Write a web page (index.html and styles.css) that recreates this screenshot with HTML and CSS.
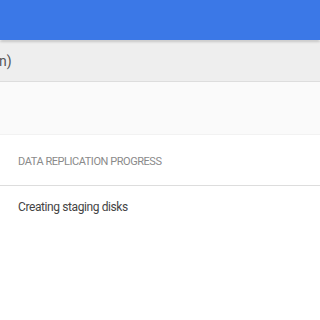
FILE: index.html
```html
<!DOCTYPE html>
<html lang="en">
<head>
    <meta charset="UTF-8">
    <meta name="viewport" content="width=device-width, initial-scale=1.0">
    <title>Migration</title>
    <link rel="stylesheet" href="styles.css">
</head>
<body>
    <header class="app-bar"></header>
    <div class="sub-bar">
        <span class="sub-title">n)</span>
    </div>
    <div class="info-panel"></div>
    <section class="progress">
        <div class="progress-head">DATA REPLICATION PROGRESS</div>
        <div class="progress-row">Creating staging disks</div>
    </section>
</body>
</html>
```

FILE: styles.css
```css
body {
    margin: 0;
    font-family: Roboto, "Liberation Sans", Arial, sans-serif;
    background-color: #fff;
    width: 320px;
    height: 320px;
    overflow: hidden;
}
.app-bar {
    height: 40px;
    background-color: #3b78e7;
    box-shadow: 0 1px 3px rgba(0, 0, 0, 0.3);
    position: relative;
    z-index: 1;
}
.sub-bar {
    height: 40px;
    margin-top: 1px;
    background-color: #eee;
    border-bottom: 1px solid #ddd;
    display: flex;
    align-items: center;
}
.sub-title {
    font-size: 14px;
    color: #555;
    margin-left: -1px;
}
.info-panel {
    height: 52px;
    background-color: #fafafa;
    border-bottom: 1px solid #f2f2f2;
}
.progress-head {
    height: 51px;
    box-sizing: border-box;
    padding: 20px 0 0 18px;
    font-size: 11px;
    letter-spacing: -0.45px;
    color: #8a8a8a;
    border-bottom: 1px solid #ddd;
}
.progress-row {
    padding: 14px 0 0 18px;
    font-size: 12px;
    letter-spacing: -0.4px;
    color: #444;
}
```
